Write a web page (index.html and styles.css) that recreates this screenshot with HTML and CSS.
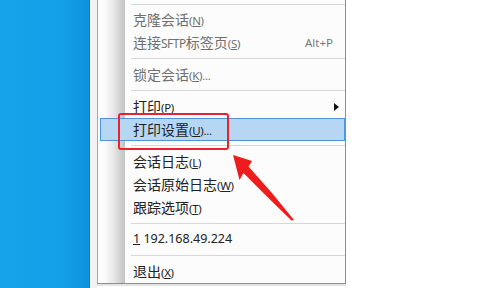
FILE: index.html
```html
<!DOCTYPE html>
<html lang="zh-CN">
<head>
<meta charset="utf-8">
<title>菜单</title>
<link rel="stylesheet" href="styles.css">
</head>
<body>
<div class="screen">
  <div class="desktop"></div>
  <div class="edge"></div>
  <div class="strip"></div>
  <div class="menu">
    <div class="sep first"></div>
    <div class="item dis"><span class="label">克隆会话<span class="acc">(<u>N</u>)</span></span></div>
    <div class="item dis"><span class="label">连接<span class="lat">SFTP</span>标签页<span class="acc">(<u>S</u>)</span></span><span class="short">Alt+P</span></div>
    <div class="sep"></div>
    <div class="item dis"><span class="label">锁定会话<span class="acc">(<u>K</u>)...</span></span></div>
    <div class="sep"></div>
    <div class="item"><span class="label">打印<span class="acc">(<u>P</u>)</span></span><span class="sub"></span></div>
    <div class="item hl"><span class="label">打印设置<span class="acc">(<u>U</u>)...</span></span></div>
    <div class="sep"></div>
    <div class="item"><span class="label">会话日志<span class="acc">(<u>L</u>)</span></span></div>
    <div class="item"><span class="label">会话原始日志<span class="acc">(<u>W</u>)</span></span></div>
    <div class="item"><span class="label">跟踪选项<span class="acc">(<u>T</u>)</span></span></div>
    <div class="sep"></div>
    <div class="item"><span class="label ip"><u>1</u> 192.168.49.224</span></div>
    <div class="sep"></div>
    <div class="item"><span class="label">退出<span class="acc">(<u>X</u>)</span></span></div>
  </div>
  <div class="rest"></div>
  <div class="callout-box"></div>
  <svg class="callout-arrow" width="500" height="288" viewBox="0 0 500 288">
    <path d="M233 155 L252 161 L248.5 166.5 Q272 192 294 220 L291.5 220.5 Q266 196 243.5 173 L239.5 180 Z" fill="#ee1c1c"/>
  </svg>
</div>
</body>
</html>
```
FILE: styles.css
```css
html, body {
  margin: 0;
  padding: 0;
  background: #ffffff;
}
.screen {
  position: relative;
  width: 500px;
  height: 288px;
  overflow: hidden;
  display: flex;
  align-items: flex-start;
  font-family: "Noto Sans CJK SC", "Noto Sans", sans-serif;
}
.desktop {
  width: 89px;
  height: 288px;
  background: linear-gradient(to right, #16a3ea 0, #12a0e8 70%, #0e92dc 100%);
}
.edge {
  width: 1px;
  height: 288px;
  background: #5a6570;
}
.strip {
  width: 7px;
  height: 288px;
  background: #f2f2f2;
}
.menu {
  width: 247px;
  height: 283px;
  border-left: 1px solid #a8a8a8;
  border-right: 1px solid #8e8e8e;
  border-bottom: 1px solid #8e8e8e;
  box-shadow: 2px 0 0 #d4d4d4, 0 2px 0 #e4e4e4;
  background: linear-gradient(to right,
    #ffffff 0, #fbfbfb 7px, #e6e6e6 16px, #c2c2c2 27px,
    #f8f8f8 27px, #ffffff 29px, #fcfcfc 29px);
  display: flex;
  flex-direction: column;
}
.rest {
  flex: 1;
  height: 288px;
  background: #ffffff;
}
.sep {
  height: 1px;
  margin: 4px 0 4px 33px;
  background: #d7d7d7;
}
.sep.first {
  margin-top: 4px;
  margin-bottom: 3px;
}
.item {
  height: 23px;
  display: flex;
  align-items: center;
  padding: 0 12px 0 35px;
  font-size: 14px;
  color: #222222;
  box-sizing: border-box;
}
.item.dis {
  color: #707070;
}
.label {
  flex: 1;
  white-space: nowrap;
  line-height: 1;
}
.lat {
  font-family: "Noto Sans", sans-serif;
  font-size: 12px;
  letter-spacing: -0.5px;
}
.acc {
  font-family: "Noto Sans", sans-serif;
  font-size: 11.5px;
  letter-spacing: -0.3px;
}
.acc u {
  text-decoration-thickness: 1px;
  text-underline-offset: 1px;
}
.ip {
  font-family: "Noto Sans", sans-serif;
  font-size: 12.5px;
}
.short {
  font-family: "Noto Sans", sans-serif;
  font-size: 11.5px;
  color: #7a7a7a;
}
.sub {
  width: 0;
  height: 0;
  border-left: 5px solid #111;
  border-top: 4px solid transparent;
  border-bottom: 4px solid transparent;
  margin-right: -6px;
}
.item.hl {
  margin-left: 2px;
  padding-left: 32px;
  background: #b5d7f4;
  border: 1px solid #4f93da;
  color: #1f1f1f;
}
.callout-box {
  position: absolute;
  left: 118px;
  top: 113px;
  width: 111px;
  height: 37px;
  box-sizing: border-box;
  border: 2.5px solid #e8242a;
  border-radius: 3px;
}
.callout-arrow {
  position: absolute;
  left: 0;
  top: 0;
}
```
